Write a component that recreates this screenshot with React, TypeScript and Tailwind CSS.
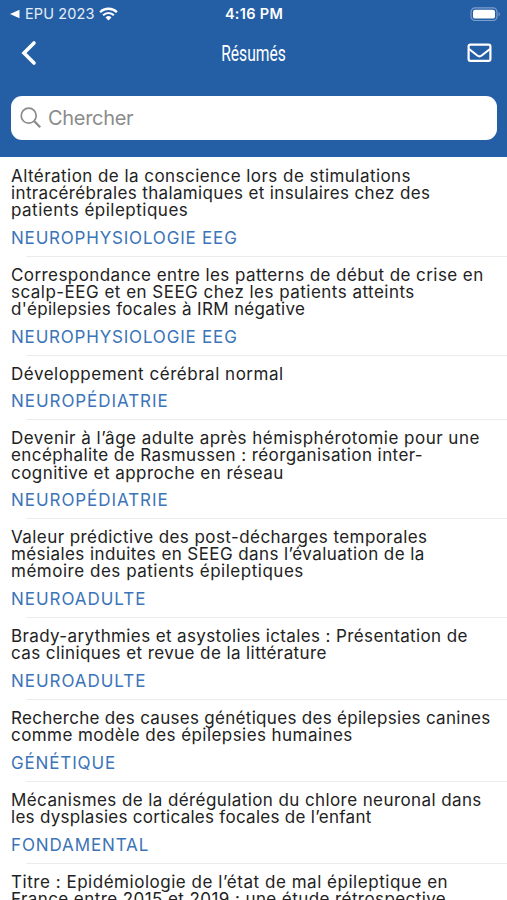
type Line = { text: string; tracking: string };

type Abstract = { lines: Line[]; category: string; categoryTracking: string };

const abstracts: Abstract[] = [
  {
    lines: [
      { text: "Altération de la conscience lors de stimulations", tracking: "tracking-[0.45px]" },
      { text: "intracérébrales thalamiques et insulaires chez des", tracking: "tracking-[0.36px]" },
      { text: "patients épileptiques", tracking: "tracking-[0.5px]" },
    ],
    category: "NEUROPHYSIOLOGIE EEG",
    categoryTracking: "tracking-[0.8px]",
  },
  {
    lines: [
      { text: "Correspondance entre les patterns de début de crise en", tracking: "tracking-[0.42px]" },
      { text: "scalp-EEG et en SEEG chez les patients atteints", tracking: "tracking-[0.48px]" },
      { text: "d'épilepsies focales à IRM négative", tracking: "tracking-[0.33px]" },
    ],
    category: "NEUROPHYSIOLOGIE EEG",
    categoryTracking: "tracking-[0.8px]",
  },
  {
    lines: [{ text: "Développement cérébral normal", tracking: "tracking-[0.52px]" }],
    category: "NEUROPÉDIATRIE",
    categoryTracking: "tracking-[0.94px]",
  },
  {
    lines: [
      { text: "Devenir à l’âge adulte après hémisphérotomie pour une", tracking: "tracking-[0.49px]" },
      { text: "encéphalite de Rasmussen : réorganisation inter-", tracking: "tracking-[0.41px]" },
      { text: "cognitive et approche en réseau", tracking: "tracking-[0.45px]" },
    ],
    category: "NEUROPÉDIATRIE",
    categoryTracking: "tracking-[0.94px]",
  },
  {
    lines: [
      { text: "Valeur prédictive des post-décharges temporales", tracking: "tracking-[0.43px]" },
      { text: "mésiales induites en SEEG dans l’évaluation de la", tracking: "tracking-[0.41px]" },
      { text: "mémoire des patients épileptiques", tracking: "tracking-[0.52px]" },
    ],
    category: "NEUROADULTE",
    categoryTracking: "tracking-[0.95px]",
  },
  {
    lines: [
      { text: "Brady-arythmies et asystolies ictales : Présentation de", tracking: "tracking-[0.38px]" },
      { text: "cas cliniques et revue de la littérature", tracking: "tracking-[0.41px]" },
    ],
    category: "NEUROADULTE",
    categoryTracking: "tracking-[0.95px]",
  },
  {
    lines: [
      { text: "Recherche des causes génétiques des épilepsies canines", tracking: "tracking-[0.3px]" },
      { text: "comme modèle des épilepsies humaines", tracking: "tracking-[0.44px]" },
    ],
    category: "GÉNÉTIQUE",
    categoryTracking: "tracking-[0.85px]",
  },
  {
    lines: [
      { text: "Mécanismes de la dérégulation du chlore neuronal dans", tracking: "tracking-[0.41px]" },
      { text: "les dysplasies corticales focales de l’enfant", tracking: "tracking-[0.28px]" },
    ],
    category: "FONDAMENTAL",
    categoryTracking: "tracking-[0.88px]",
  },
  {
    lines: [
      { text: "Titre : Epidémiologie de l’état de mal épileptique en", tracking: "tracking-[0.53px]" },
      { text: "France entre 2015 et 2019 : une étude rétrospective", tracking: "tracking-[0.42px]" },
    ],
    category: "",
    categoryTracking: "tracking-[0.8px]",
  },
];

function StatusBar() {
  return (
    <div className="grid h-7 grid-cols-3 items-center pl-2.5 pr-1.5 text-white">
      <div className="flex items-center">
        <svg width="10" height="10" viewBox="0 0 10 10" fill="currentColor">
          <path d="M0 5 9.5 0.7v8.6z" />
        </svg>
        <span className="ml-[5px] text-[14.5px] leading-5 tracking-[0.1px] text-[#e4edf7]">EPU 2023</span>
        <svg className="ml-[5px]" width="19" height="14" viewBox="0 0 19 14" fill="none" stroke="currentColor">
          <path d="M1.1 5.2a12 12 0 0 1 16.8 0" strokeWidth="2.3" />
          <path d="M4.1 8.2a7.7 7.7 0 0 1 10.8 0" strokeWidth="2.2" />
          <path d="m9.5 13.6-3-3.1a4.3 4.3 0 0 1 6 0z" fill="currentColor" stroke="none" />
        </svg>
      </div>
      <span className="pr-[3px] text-center text-[14.5px] font-semibold leading-5 tracking-[0.3px]">4:16 PM</span>
      <svg className="justify-self-end" width="31" height="15" viewBox="0 0 31 15" fill="none">
        <rect x="1" y="0.9" width="26" height="12.6" rx="4" stroke="#7f9fcb" strokeWidth="1.2" />
        <rect x="3" y="2.8" width="22" height="8.8" rx="2.2" fill="#fff" />
        <path d="M28.6 5.2c1.7.6 1.7 3.5 0 4.1z" fill="#7f9fcb" />
      </svg>
    </div>
  );
}

function NavBar() {
  return (
    <div className="grid h-[50px] grid-cols-[1fr_auto_1fr] items-center pl-5 pr-[15px] text-white">
      <svg width="18" height="26" viewBox="0 0 18 26" fill="none" stroke="currentColor" strokeWidth="3.6">
        <path d="M14 3 4 13l10 10" strokeLinecap="round" />
      </svg>
      <h1 className="-translate-x-0.5 translate-y-px scale-x-[0.71] font-['Roboto',sans-serif] text-[22px] leading-6">
        Résumés
      </h1>
      <svg
        className="justify-self-end"
        width="25"
        height="20"
        viewBox="0 0 25 20"
        fill="none"
        stroke="currentColor"
        strokeWidth="2.2"
        strokeLinejoin="round"
      >
        <rect x="1.6" y="1.6" width="21.8" height="16.2" rx="1.8" />
        <path d="m2 6 8.3 6.5q2.2 1.7 4.4 0L23 6" />
      </svg>
    </div>
  );
}

function SearchField() {
  return (
    <div className="pl-[11px] pr-2.5 pt-[18px]">
      <div className="flex h-11 items-center rounded-[11px] bg-white pl-[9px] text-[#8b8b8b]">
        <svg width="22" height="22" viewBox="0 0 22 22" fill="none" stroke="currentColor" strokeWidth="1.7">
          <circle cx="8.7" cy="8.7" r="7.5" />
          <path d="m14 14 6.2 6.2" strokeWidth="2.3" />
        </svg>
        <span className="ml-[6px] text-xl leading-6 tracking-[-0.3px]">Chercher</span>
      </div>
    </div>
  );
}

function AbstractRow({ abstract }: { abstract: Abstract }) {
  return (
    <li>
      <div className="px-[11px] pb-2 pt-2.5">
        <p className="text-[17px] leading-[17.15px] text-[#222]">
          {abstract.lines.map((line) => (
            <span key={line.text} className={`block whitespace-nowrap ${line.tracking}`}>
              {line.text}
            </span>
          ))}
        </p>
        {abstract.category && (
          <p className={`mt-[8.5px] text-[17px] leading-5 text-[#3b74b8] ${abstract.categoryTracking}`}>
            {abstract.category}
          </p>
        )}
      </div>
      <div className="ml-[26px] h-px bg-[#ececec]" />
    </li>
  );
}

export default function App() {
  return (
    <div className="flex h-[900px] w-[507px] flex-col overflow-hidden bg-white font-['Inter',sans-serif]">
      <header className="h-[157px] shrink-0 bg-[#245fa6]">
        <StatusBar />
        <NavBar />
        <SearchField />
      </header>
      <ul className="min-h-0 flex-1 overflow-hidden pt-[0.6px]">
        {abstracts.map((abstract) => (
          <AbstractRow key={abstract.lines[0].text} abstract={abstract} />
        ))}
      </ul>
    </div>
  );
}
